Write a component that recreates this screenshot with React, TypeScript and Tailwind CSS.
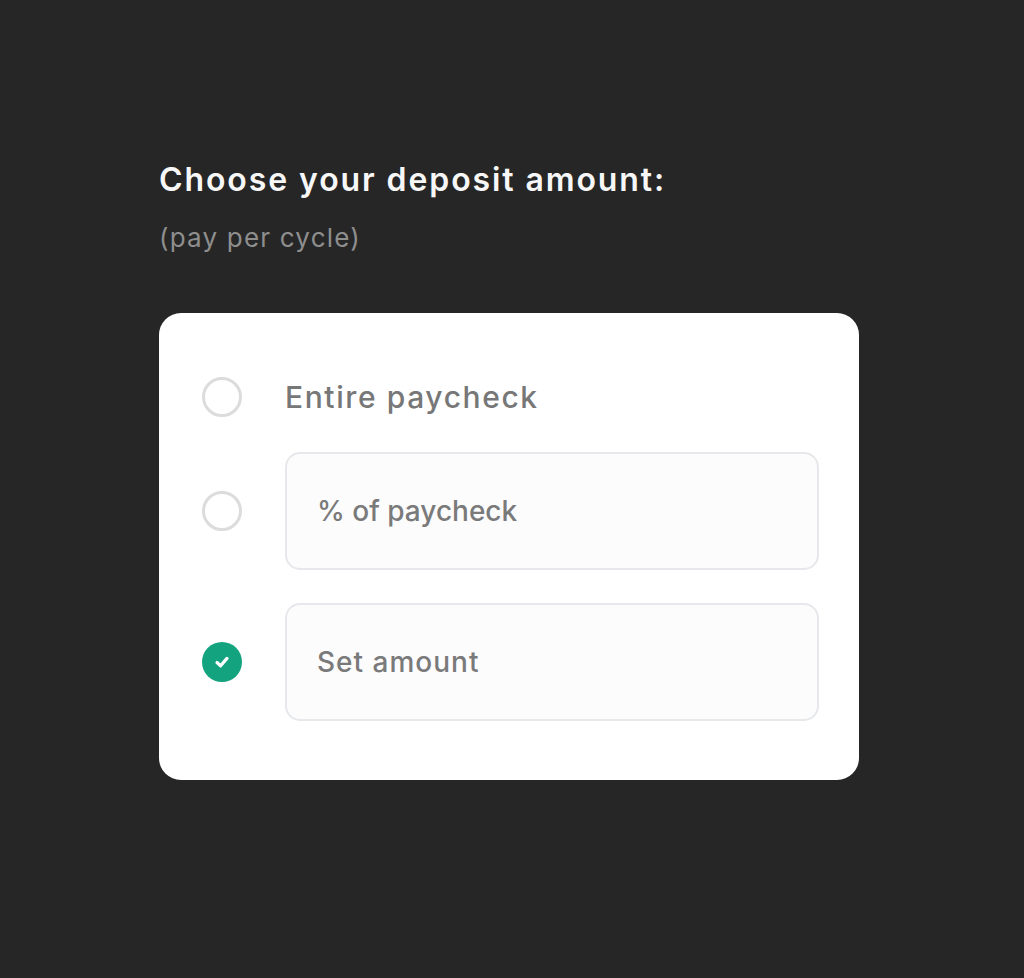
import React from 'react'

const options = [
  { label: 'Entire paycheck', boxed: false, checked: false, track: 'tracking-[1.6px]' },
  { label: '% of paycheck', boxed: true, checked: false, track: 'tracking-[0px]' },
  { label: 'Set amount', boxed: true, checked: true, track: 'tracking-[1px]' },
]

function Radio({ checked }: { checked: boolean }) {
  if (checked) {
    return (
      <div className="w-10 h-10 rounded-full bg-[#14a37f] flex items-center justify-center shrink-0">
        <svg width="20" height="20" viewBox="0 0 20 20" fill="none">
          <path d="M5 10.5 L8.6 13.8 L15 6.4" stroke="white" strokeWidth="3.2" strokeLinecap="round" strokeLinejoin="round" />
        </svg>
      </div>
    )
  }
  return <div className="w-10 h-10 rounded-full border-[3px] border-[#dcdcdc] shrink-0" />
}

export default function App() {
  return (
    <div className="min-h-[978px] bg-[#262626] font-['Inter',sans-serif]">
      <div className="pt-[158px] pl-[159px]">
        <h1 className="text-[32px] leading-[44px] font-semibold text-[#f7f7f7] tracking-[1.9px]">
          Choose your deposit amount:
        </h1>
        <p className="mt-[20px] text-[26px] leading-[32px] text-[#8e8e8e] tracking-[1.2px]">(pay per cycle)</p>

        <div className="mt-[59px] w-[700px] h-[467px] bg-white rounded-[22px] pl-[43px] pr-[40px] pt-[48px]">
          {/* first row: plain label */}
          <div className="flex items-center h-[72px]">
            <Radio checked={false} />
            <span className={`ml-[43px] text-[30px] font-medium text-[#777777] ${options[0].track}`}>{options[0].label}</span>
          </div>

          <div className="mt-[19px] flex flex-col gap-[33px]">
            {options.filter((o) => o.boxed).map((o) => (
              <div key={o.label} className="flex items-center">
                <Radio checked={o.checked} />
                <div className="ml-[43px] flex-1 h-[118px] rounded-[15px] border-2 border-[#e6e8eb] bg-[#fcfcfd] flex items-center pl-[30px]">
                  <span className={`text-[28px] font-medium text-[#7a7a7a] ${o.track}`}>{o.label}</span>
                </div>
              </div>
            ))}
          </div>
        </div>
      </div>
    </div>
  )
}
